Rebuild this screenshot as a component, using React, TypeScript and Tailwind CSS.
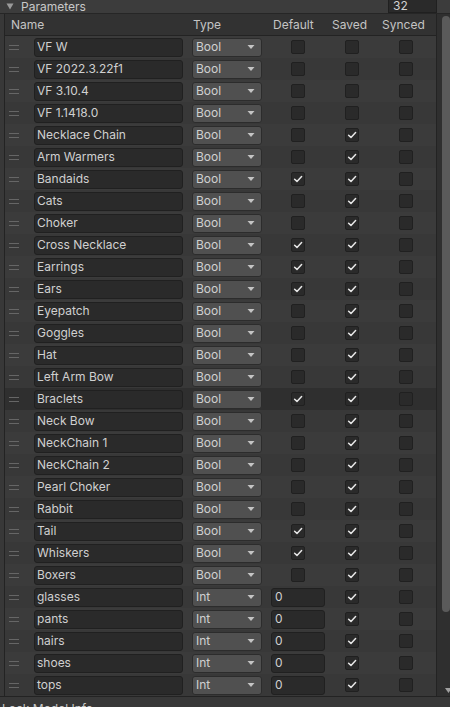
import React from "react";

type Param = {
  name: string;
  type: "Bool" | "Int";
  def: boolean;
  saved: boolean;
  synced: boolean;
};

const b = (name: string, def: boolean, saved: boolean): Param => ({ name, type: "Bool", def, saved, synced: false });
const n = (name: string): Param => ({ name, type: "Int", def: false, saved: true, synced: false });

const params: Param[] = [
  b("VF W", false, false),
  b("VF 2022.3.22f1", false, false),
  b("VF 3.10.4", false, false),
  b("VF 1.1418.0", false, false),
  b("Necklace Chain", false, true),
  b("Arm Warmers", false, true),
  b("Bandaids", true, true),
  b("Cats", false, true),
  b("Choker", false, true),
  b("Cross Necklace", true, true),
  b("Earrings", true, true),
  b("Ears", true, true),
  b("Eyepatch", false, true),
  b("Goggles", false, true),
  b("Hat", false, true),
  b("Left Arm Bow", false, true),
  b("Braclets", true, true),
  b("Neck Bow", false, true),
  b("NeckChain 1", false, true),
  b("NeckChain 2", false, true),
  b("Pearl Choker", false, true),
  b("Rabbit", false, true),
  b("Tail", true, true),
  b("Whiskers", true, true),
  b("Boxers", false, true),
  n("glasses"),
  n("pants"),
  n("hairs"),
  n("shoes"),
  n("tops"),
];

function Check({ on }: { on: boolean }) {
  return (
    <div className="w-[14px] h-[14px] rounded-[2px] bg-[#2a2a2a] border border-[#202020] flex items-center justify-center">
      {on && (
        <svg width="10" height="10" viewBox="0 0 10 10">
          <path d="M1.6 5.2 L4 7.4 L8.6 2.6" fill="none" stroke="#e8e8e8" strokeWidth="1.5" strokeLinecap="round" strokeLinejoin="round" />
        </svg>
      )}
    </div>
  );
}

function Handle() {
  return (
    <div className="w-[29px] h-full flex flex-col justify-center gap-[3px] pl-[4px]">
      <div className="w-[10px] h-px bg-[#666666]" />
      <div className="w-[10px] h-px bg-[#666666]" />
    </div>
  );
}

function Row({ p, index }: { p: Param; index: number }) {
  const selected = p.name === "Braclets";
  const bg = selected ? "bg-[#2f2f2f]" : index % 2 === 0 ? "bg-[#3b3b3b]" : "bg-[#383838]";
  return (
    <div className={`h-[22px] flex items-center ${bg}`}>
      <Handle />
      <div className="w-[149px] h-[19px] rounded-[3px] bg-[#2a2a2a] border border-[#202020] flex items-center pl-[2px] text-[12px] text-[#d0d0d0] leading-none">
        {p.name}
      </div>
      <div className="ml-[9px] w-[70px] h-[19px] rounded-[3px] bg-[#505050] border border-[#2c2c2c] flex items-center justify-between pl-[3px] pr-[6px] text-[12px] text-[#d0d0d0] leading-none">
        <span>{p.type}</span>
        <svg width="8" height="6" viewBox="0 0 8 6">
          <path d="M0.5 1 L7.5 1 L4 5 Z" fill="#c4c4c4" />
        </svg>
      </div>
      <div className="w-[72px] flex justify-center">
        {p.type === "Bool" ? (
          <Check on={p.def} />
        ) : (
          <div className="w-[54px] h-[19px] rounded-[3px] bg-[#2a2a2a] border border-[#202020] flex items-center pl-[3px] text-[12px] text-[#d0d0d0] leading-none">
            0
          </div>
        )}
      </div>
      <div className="w-[36px] flex justify-center">
        <Check on={p.saved} />
      </div>
      <div className="ml-[29px]">
        <Check on={p.synced} />
      </div>
    </div>
  );
}

export default function App() {
  return (
    <div
      className="w-[450px] h-[707px] overflow-hidden bg-[#383838] text-[#c4c4c4] select-none"
      style={{ fontFamily: "Inter, 'Noto Sans', sans-serif" }}
    >
      {/* foldout bar */}
      <div className="h-[14px] flex items-center bg-[#3c3c3c] border-b border-[#262626]">
        <svg width="8" height="7" viewBox="0 0 8 7" className="ml-[6px]">
          <path d="M0.5 0.5 L7.5 0.5 L4 6.5 Z" fill="#9a9a9a" />
        </svg>
        <span className="ml-[7px] text-[12px] leading-none text-[#c8c8c8]">Parameters</span>
        <div className="ml-auto mr-[13px] w-[49px] h-[13px] bg-[#2a2a2a] border-x border-b border-[#202020] flex items-center pl-[4px] text-[12px] leading-none text-[#d2d2d2]">
          32
        </div>
      </div>

      <div className="flex h-[682px]">
        {/* list */}
        <div className="ml-[4px] w-[433px] flex flex-col border-l border-r border-[#232323]">
          <div className="h-[22px] shrink-0 flex items-center bg-[#323232] border-b border-[#232323] text-[12px] leading-none text-[#c4c4c4]">
            <span className="ml-[6px] w-[182px]">Name</span>
            <span className="w-[80px]">Type</span>
            <span className="w-[59px]">Default</span>
            <span className="w-[50px]">Saved</span>
            <span>Synced</span>
          </div>
          {params.map((p, i) => (
            <Row key={p.name} p={p} index={i} />
          ))}
        </div>
        {/* scrollbar */}
        <div className="flex-1 flex bg-[#2f2f2f] relative">
          <div className="ml-[5px] mt-[2px] w-[8px] h-[596px] rounded-[4px] bg-[#5a5a5a]" />
          <svg width="7" height="5" viewBox="0 0 7 5" className="absolute left-[8px] top-[674px]">
            <path d="M0 0 L7 0 L3.5 5 Z" fill="#a0a0a0" />
          </svg>
        </div>
      </div>

      <div className="h-[11px] border-t border-[#232323] bg-[#383838] pl-[2px] pt-[6px] text-[12px] leading-none text-[#c8c8c8]">
        Lock Model Info
      </div>
    </div>
  );
}
